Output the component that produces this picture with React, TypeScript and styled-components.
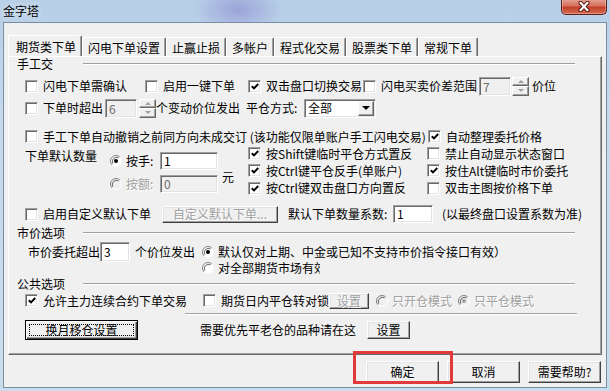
import React from "react";
import styled, { createGlobalStyle, css } from "styled-components";

const GlobalStyle = createGlobalStyle`
  html, body { margin: 0; padding: 0; background: #c5d9eb; }
  body {
    font-family: "Noto Sans CJK SC", "Liberation Sans", sans-serif;
    font-size: 12px;
    color: #000;
  }
  * { box-sizing: border-box; }
`;

const Window = styled.div`
  position: relative;
  width: 610px;
  height: 391px;
  display: flex;
  flex-direction: column;
  overflow: hidden;
  background:
    radial-gradient(ellipse 45px 26px at 238px 10px, rgba(120, 110, 200, 0.45), transparent),
    linear-gradient(180deg, #b7cfe7 0%, #c4d9ec 30%, #cadded 100%);
`;

const TitleBar = styled.div`
  height: 22px;
  display: flex;
  align-items: flex-start;
  justify-content: space-between;
  padding: 0 3px;
`;

const Title = styled.span`
  line-height: 20px;
  padding-top: 1px;
  text-shadow: 0 0 6px rgba(255, 255, 255, 0.9);
`;

const CloseButton = styled.div`
  width: 46px;
  height: 16px;
  margin-top: -1px;
  border: 1px solid #5e2019;
  border-top: none;
  border-radius: 0 0 5px 5px;
  background: linear-gradient(180deg, #e6a597 0%, #d66f5b 45%, #c2412c 55%, #d56a4f 100%);
  box-shadow: inset 0 0 0 1px rgba(255, 255, 255, 0.3);
  display: flex;
  align-items: center;
  justify-content: center;
`;

const Client = styled.div`
  flex: 1;
  margin: 0 3px 3px;
  border: 1px solid #7a8ea3;
  background: #f0f0f0;
  display: flex;
  flex-direction: column;
  padding: 12px 3px 0 4px;
`;

const TabStrip = styled.div`
  display: flex;
  align-items: flex-end;
  height: 21px;
`;

const Tab = styled.div<{ $active?: boolean }>`
  height: ${(p) => (p.$active ? 21 : 19)}px;
  padding: ${(p) => (p.$active ? "0 5px 0 7px" : "0 5px")};
  display: flex;
  align-items: center;
  background: #f0f0f0;
  border-top: 1px solid #fff;
  border-left: 1px solid #fff;
  border-right: 1px solid #696969;
  box-shadow: inset -1px 0 0 #a0a0a0;
  border-radius: 2px 2px 0 0;
  white-space: nowrap;
`;

const Panel = styled.div`
  width: 594px;
  height: 299px;
  border-top: 1px solid #fff;
  border-left: 1px solid #fff;
  border-right: 1px solid #696969;
  border-bottom: 1px solid #696969;
  box-shadow: inset -1px -1px 0 #a0a0a0;
  display: flex;
  flex-direction: column;
  padding-left: 8px;
`;

const GroupHead = styled.div<{ $mt: number }>`
  display: flex;
  align-items: center;
  width: 558px;
  height: 14px;
  margin-top: ${(p) => p.$mt}px;
  line-height: 14px;
`;

const GroupLabel = styled.span`
  width: 66px;
  flex: none;
`;

const Etched = styled.div<{ $ml?: number; $w?: number; $mt?: number }>`
  flex: ${(p) => (p.$w ? "none" : "1")};
  width: ${(p) => (p.$w ? `${p.$w}px` : "auto")};
  margin-left: ${(p) => p.$ml ?? 0}px;
  margin-top: ${(p) => p.$mt ?? 0}px;
  height: 2px;
  border-top: 1px solid #a0a0a0;
  border-bottom: 1px solid #fff;
`;

const Row = styled.div<{ $h: number; $mt?: number; $ml?: number; $top?: boolean }>`
  display: flex;
  align-items: ${(p) => (p.$top ? "flex-start" : "center")};
  height: ${(p) => p.$h}px;
  margin-top: ${(p) => p.$mt ?? 0}px;
  margin-left: ${(p) => p.$ml ?? 8}px;
  line-height: 14px;
  white-space: nowrap;
`;

const Column = styled.div<{ $w?: number; $ml?: number }>`
  display: flex;
  flex-direction: column;
  flex: none;
  width: ${(p) => (p.$w ? `${p.$w}px` : "auto")};
  margin-left: ${(p) => p.$ml ?? 0}px;
`;

const Text = styled.span<{ $ml?: number; $mt?: number; $w?: number; $disabled?: boolean; $lh?: number }>`
  flex: none;
  margin-left: ${(p) => p.$ml ?? 0}px;
  margin-top: ${(p) => p.$mt ?? 0}px;
  width: ${(p) => (p.$w ? `${p.$w}px` : "auto")};
  line-height: ${(p) => p.$lh ?? 14}px;
  ${(p) =>
    p.$disabled &&
    css`
      color: #a0a0a0;
      text-shadow: 1px 1px 0 #fff;
    `}
`;

const Item = styled.div<{ $w?: number; $ml?: number; $h?: number; $mt?: number; $clip?: boolean }>`
  display: flex;
  align-items: center;
  gap: 5px;
  flex: none;
  width: ${(p) => (p.$w ? `${p.$w}px` : "auto")};
  height: ${(p) => (p.$h ? `${p.$h}px` : "auto")};
  margin-left: ${(p) => p.$ml ?? 0}px;
  margin-top: ${(p) => p.$mt ?? 0}px;
  overflow-x: ${(p) => (p.$clip ? "clip" : "visible")};
  white-space: nowrap;
`;

const RadioItem = styled(Item)`
  gap: 4px;
`;

const Box = styled.span`
  width: 13px;
  height: 13px;
  flex: none;
  background: #fff;
  border: 1px solid;
  border-color: #a0a0a0 #fff #fff #a0a0a0;
  box-shadow: inset 1px 1px 0 #696969, inset -1px -1px 0 #e3e3e3;
  display: flex;
  align-items: center;
  justify-content: center;
`;

const Field = styled.div<{ $w: number; $h: number; $disabled?: boolean; $ml?: number }>`
  width: ${(p) => p.$w}px;
  height: ${(p) => p.$h}px;
  flex: none;
  margin-left: ${(p) => p.$ml ?? 0}px;
  background: ${(p) => (p.$disabled ? "#f0f0f0" : "#fff")};
  color: ${(p) => (p.$disabled ? "#6d6d6d" : "#000")};
  border: 1px solid;
  border-color: #a0a0a0 #fff #fff #a0a0a0;
  box-shadow: inset 1px 1px 0 #696969, inset -1px -1px 0 #e3e3e3;
  padding: 0 3px;
  line-height: ${(p) => p.$h - 2}px;
`;

const Spinner = styled.div<{ $h: number; $ml?: number }>`
  display: flex;
  flex-direction: column;
  flex: none;
  width: 17px;
  height: ${(p) => p.$h}px;
  margin-left: ${(p) => p.$ml ?? 0}px;
`;

const SpinButton = styled.div`
  flex: 1;
  display: flex;
  align-items: center;
  justify-content: center;
  background: #f0f0f0;
  border: 1px solid;
  border-color: #fff #696969 #696969 #fff;
  box-shadow: inset -1px -1px 0 #a0a0a0;
`;

const Arrow = styled.span<{ $dir: "up" | "down"; $color?: string }>`
  width: 0;
  height: 0;
  border-left: 3px solid transparent;
  border-right: 3px solid transparent;
  ${(p) =>
    p.$dir === "up"
      ? css`border-bottom: 3px solid ${p.$color ?? "#a0a0a0"};`
      : css`border-top: 3px solid ${p.$color ?? "#a0a0a0"};`}
`;

const Select = styled.div`
  width: 72px;
  height: 19px;
  flex: none;
  display: flex;
  align-items: center;
  justify-content: space-between;
  background: #fff;
  border: 1px solid;
  border-color: #a0a0a0 #fff #fff #a0a0a0;
  box-shadow: inset 1px 1px 0 #696969, inset -1px -1px 0 #e3e3e3;
  padding: 0 1px 0 3px;
`;

const DropButton = styled.div`
  width: 16px;
  height: 15px;
  display: flex;
  align-items: center;
  justify-content: center;
  background: #f0f0f0;
  border: 1px solid;
  border-color: #fff #696969 #696969 #fff;
  box-shadow: inset -1px -1px 0 #a0a0a0;
`;

const DropArrow = styled.span`
  width: 0;
  height: 0;
  border-left: 4px solid transparent;
  border-right: 4px solid transparent;
  border-top: 4px solid #000;
`;

const Button = styled.div<{ $w: number; $h: number; $ml?: number; $disabled?: boolean; $default?: boolean }>`
  width: ${(p) => p.$w}px;
  height: ${(p) => p.$h}px;
  flex: none;
  margin-left: ${(p) => p.$ml ?? 0}px;
  display: flex;
  align-items: center;
  justify-content: center;
  background: #f0f0f0;
  line-height: 14px;
  border: 1px solid;
  border-color: #fff #404040 #404040 #fff;
  box-shadow: inset -1px -1px 0 #a0a0a0, inset 1px 1px 0 #e3e3e3;
  ${(p) =>
    p.$disabled &&
    css`
      color: #a0a0a0;
      text-shadow: 1px 1px 0 #fff;
    `}
  ${(p) =>
    p.$default &&
    css`
      border-color: #000;
      box-shadow: inset 1px 1px 0 #fff, inset -1px -1px 0 #404040, inset -2px -2px 0 #a0a0a0;
      padding: 3px;
    `}
`;

const FocusRect = styled.span`
  flex: 1;
  align-self: stretch;
  display: flex;
  align-items: center;
  justify-content: center;
  border: 1px dotted #000;
`;

const Footer = styled.div`
  display: flex;
  justify-content: flex-end;
  gap: 8px;
  margin-top: 6px;
  padding-right: 2px;
`;

const Highlight = styled.div`
  position: absolute;
  left: 353px;
  top: 351px;
  width: 100px;
  height: 33px;
  border: 3px solid #e23a3a;
  pointer-events: none;
`;

const Check = ({
  label,
  checked,
  w,
  ml,
  h,
  clip,
}: {
  label: string;
  checked?: boolean;
  w?: number;
  ml?: number;
  h?: number;
  clip?: boolean;
}) => (
  <Item $w={w} $ml={ml} $h={h} $clip={clip}>
    <Box>
      {checked && (
        <svg width="8" height="7" viewBox="0 0 8 7">
          <path d="M0.8 3.2 L3 5.4 L7.2 1" stroke="#000" strokeWidth="2" fill="none" />
        </svg>
      )}
    </Box>
    <span>{label}</span>
  </Item>
);

const Radio = ({
  label,
  labelW,
  checked,
  disabled,
  w,
  ml,
  h,
  mt,
  clip,
  children,
}: {
  label: string;
  labelW?: number;
  checked?: boolean;
  disabled?: boolean;
  w?: number;
  ml?: number;
  h?: number;
  mt?: number;
  clip?: boolean;
  children?: React.ReactNode;
}) => (
  <RadioItem $w={w} $ml={ml} $h={h} $mt={mt} $clip={clip}>
    <svg width="12" height="12" viewBox="0 0 12 12" style={{ flex: "none" }}>
      <circle cx="6" cy="6" r="5.5" fill={disabled ? "#f0f0f0" : "#fff"} />
      <path d="M2.1 9.9 A5.5 5.5 0 0 1 9.9 2.1" stroke="#808080" fill="none" />
      <path d="M9.9 2.1 A5.5 5.5 0 0 1 2.1 9.9" stroke="#fff" fill="none" />
      <path d="M2.8 8.6 A4.3 4.3 0 0 1 8.6 2.8" stroke="#404040" fill="none" strokeWidth="0.8" />
      {checked && <circle cx="6" cy="6" r="2" fill={disabled ? "#a0a0a0" : "#000"} />}
    </svg>
    <Text $disabled={disabled} $w={labelW}>
      {label}
    </Text>
    {children}
  </RadioItem>
);

const Spin = ({ h, ml }: { h: number; ml?: number }) => (
  <Spinner $h={h} $ml={ml}>
    <SpinButton>
      <Arrow $dir="up" />
    </SpinButton>
    <SpinButton>
      <Arrow $dir="down" />
    </SpinButton>
  </Spinner>
);

const Group = ({ label, mt }: { label: string; mt: number }) => (
  <GroupHead $mt={mt}>
    <GroupLabel>{label}</GroupLabel>
    <Etched />
  </GroupHead>
);

const tabs = ["期货类下单", "闪电下单设置", "止赢止损", "多帐户", "程式化交易", "股票类下单", "常规下单"];

export default function App() {
  return (
    <>
      <GlobalStyle />
      <Window>
        <TitleBar>
          <Title>金字塔</Title>
          <CloseButton>
            <svg width="14" height="11" viewBox="0 0 14 11">
              <path d="M3.5 1.8 L10.5 9.2 M10.5 1.8 L3.5 9.2" stroke="#4a1410" strokeWidth="4" strokeLinecap="round" />
              <path d="M3.5 1.8 L10.5 9.2 M10.5 1.8 L3.5 9.2" stroke="#fff" strokeWidth="2.2" strokeLinecap="round" />
            </svg>
          </CloseButton>
        </TitleBar>
        <Client>
          <TabStrip>
            {tabs.map((t, i) => (
              <Tab key={t} $active={i === 0}>
                {t}
              </Tab>
            ))}
          </TabStrip>
          <Panel>
            <Group label="手工交" mt={0} />
            <Row $h={20} $mt={5}>
              <Check label="闪电下单需确认" w={120} />
              <Check label="启用一键下单" w={103} />
              <Check label="双击盘口切换交易" checked w={115} />
              <Check label="闪电买卖价差范围" />
              <Field $w={32} $h={19} $ml={2} $disabled>
                7
              </Field>
              <Spin h={19} ml={1} />
              <Text $ml={3}>价位</Text>
            </Row>
            <Row $h={20} $mt={2}>
              <Check label="下单时超出" />
              <Field $w={32} $h={19} $ml={2} $disabled>
                6
              </Field>
              <Spin h={19} ml={2} />
              <Text>个变动价位发出</Text>
              <Text $ml={6} $w={58}>
                平仓方式:
              </Text>
              <Select>
                <span>全部</span>
                <DropButton>
                  <DropArrow />
                </DropButton>
              </Select>
            </Row>
            <Row $h={17} $mt={10}>
              <Check label="手工下单自动撤销之前同方向未成交订 (该功能仅限单账户手工闪电交易)" w={403} clip />
              <Check label="自动整理委托价格" checked />
            </Row>
            <Row $h={52} $top>
              <Text $w={85} $mt={4}>
                下单默认数量
              </Text>
              <Column $w={108}>
                <Radio label="按手:" labelW={30} checked h={18} mt={7}>
                  <Field $w={58} $h={18}>
                    1
                  </Field>
                </Radio>
                <Radio label="按额:" labelW={30} disabled h={18} mt={5}>
                  <Field $w={58} $h={18} $disabled>
                    0
                  </Field>
                </Radio>
              </Column>
              <Text $ml={4} $mt={25}>
                元
              </Text>
              <Column $w={179} $ml={14}>
                <Check label="按Shift键临时平仓方式置反" checked h={17} />
                <Check label="按Ctrl键平仓反手(单账户)" checked h={17} />
                <Check label="按Ctrl键双击盘口方向置反" checked h={18} />
              </Column>
              <Column>
                <Check label="禁止自动显示状态窗口" h={17} />
                <Check label="按住Alt键临时市价委托" checked h={17} />
                <Check label="双击主图按价格下单" h={18} />
              </Column>
            </Row>
            <Row $h={18} $mt={8}>
              <Check label="启用自定义默认下单" w={137} />
              <Button $w={116} $h={17} $disabled>
                自定义默认下单...
              </Button>
              <Text $ml={10} $w={105}>
                默认下单数量系数:
              </Text>
              <Field $w={40} $h={18}>
                1
              </Field>
              <Text $ml={9}>(以最终盘口设置系数为准)</Text>
            </Row>
            <Group label="市价选项" mt={3} />
            <Row $h={34} $mt={2} $ml={11} $top>
              <Text $w={72} $lh={20}>
                市价委托超出
              </Text>
              <Field $w={30} $h={20}>
                3
              </Field>
              <Text $ml={5} $lh={20}>
                个价位发出
              </Text>
              <Column $ml={7}>
                <Radio label="默认仅对上期、中金或已知不支持市价指令接口有效）" checked h={20} />
                <Radio label="对全部期货市场有效" h={14} w={118} mt={-1} clip />
              </Column>
            </Row>
            <Group label="公共选项" mt={1} />
            <Row $h={17} $mt={1}>
              <Check label="允许主力连续合约下单交易" checked w={178} />
              <Check label="期货日内平仓转对锁" />
              <Button $w={40} $h={16} $disabled>
                设置
              </Button>
              <Radio label="只开仓模式" disabled w={82} ml={7} />
              <Radio label="只平仓模式" disabled checked />
            </Row>
            <Etched $w={392} $ml={168} $mt={4} />
            <Row $h={20} $mt={5}>
              <Button $w={113} $h={20} $default>
                <FocusRect>换月移仓设置</FocusRect>
              </Button>
              <Text $ml={62}>需要优先平老仓的品种请在这</Text>
              <Button $w={43} $h={18} $ml={11}>
                设置
              </Button>
            </Row>
          </Panel>
          <Footer>
            <Button $w={73} $h={22}>
              确定
            </Button>
            <Button $w={73} $h={22}>
              取消
            </Button>
            <Button $w={73} $h={22}>
              需要帮助?
            </Button>
          </Footer>
        </Client>
        <Highlight />
      </Window>
    </>
  );
}
